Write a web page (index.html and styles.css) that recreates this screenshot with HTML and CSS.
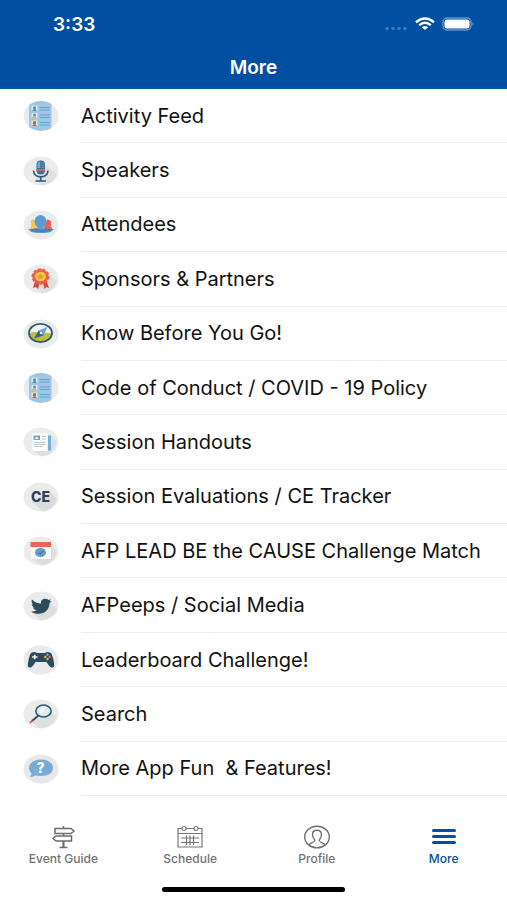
FILE: index.html
```html
<!DOCTYPE html>
<html lang="en">
<head>
    <meta charset="UTF-8">
    <meta name="viewport" content="width=device-width, initial-scale=1.0">
    <title>More</title>
    <link rel="stylesheet" href="styles.css">
</head>
<body>
    <header class="header">
        <div class="status-bar">
            <span class="time">3:33</span>
            <div class="status-icons">
                <svg width="24" height="16" viewBox="0 0 24 16" fill="#3f78bb" aria-hidden="true">
                    <circle cx="3" cy="12.5" r="1.8"/><circle cx="9" cy="12.5" r="1.8"/><circle cx="15" cy="12.5" r="1.8"/><circle cx="21" cy="12.5" r="1.8"/>
                </svg>
                <svg width="20" height="16" viewBox="0 0 20 16" fill="none" stroke="#fff" stroke-width="2.4" aria-hidden="true">
                    <path d="M1 6.2Q10-1.2 19 6.2"/>
                    <path d="M4.2 9.2Q10 4.4 15.8 9.2"/>
                    <path d="M6.8 11.2Q10 8.8 13.2 11.2L10 14Z" fill="#fff" stroke="none"/>
                </svg>
                <svg width="33" height="16" viewBox="0 0 33 16" aria-hidden="true">
                    <rect x="1" y="2" width="28" height="12" rx="4" fill="none" stroke="#5f92cb" stroke-width="1.4"/>
                    <rect x="2.5" y="3.5" width="25" height="9" rx="2.5" fill="#fff"/>
                    <path d="M30.5 6Q33 8 30.5 10Z" fill="#5f92cb"/>
                </svg>
            </div>
        </div>
        <h1>More</h1>
    </header>

    <main>
        <ul class="menu">
            <li>
                <a href="#">
                    <svg class="icon" viewBox="0 0 36 30" aria-hidden="true">
                        <defs>
                            <clipPath id="disc"><ellipse cx="18" cy="15" rx="17.5" ry="15"/></clipPath>
                            <g id="feed">
                                <ellipse cx="18" cy="15" rx="17.5" ry="14.5" fill="#e9eaea"/>
                                <path clip-path="url(#disc)" fill="#9dc7e5" d="M6 0H28.5V30H6Z"/>
                                <path fill="#d8eaf5" d="M8.5 4.5h6V10h-6zM8.5 12h6v5.5h-6zM8.5 19.5h6V25h-6z"/>
                                <path fill="#4a88bf" d="M9 10Q11.5 6 14 10Z"/>
                                <circle cx="11.5" cy="6.8" r="1.5" fill="#4a88bf"/>
                                <path fill="#c9b44c" d="M8.5 17.5Q11 13.5 14.5 17.5Z"/>
                                <circle cx="11.5" cy="14" r="1.5" fill="#6d8f9f"/>
                                <path fill="#d9534f" d="M9 25Q11.5 21 14 25Z"/>
                                <circle cx="11.5" cy="21.8" r="1.7" fill="#d9534f"/>
                                <path stroke="#6a9fc8" stroke-width="1.2" d="M16.5 6.5H26.5M16.5 9H26.5M16.5 14H26.5M16.5 16.500H26.5M16.5 21.5H26.5M16.5 24H26.5"/>
                            </g>
                        </defs>
                        <use href="#feed"/>
                    </svg>
                    <span>Activity Feed</span>
                </a>
            </li>
            <li>
                <a href="#">
                    <svg class="icon" viewBox="0 0 36 30" aria-hidden="true">
                        <ellipse cx="18" cy="15" rx="17.5" ry="14.5" fill="#ececec"/>
                        <path fill="#dfe1e1" d="M22 9L34 18Q30 28 19 29.5L12 24Z"/>
                        <path fill="none" stroke="#2d5872" stroke-width="1.6" d="M10.5 14.5C10.500 23 25 23 25 14.5M17.700 21V25M12.500 25H23"/>
                        <rect x="13.5" y="4.5" width="8.500" height="14" rx="4" fill="#3f7195"/>
                        <path fill="#72a9ce" d="M14.5 8.5Q14.5 5.5 17 5.5V12H14.5Z"/>
                        <path fill="#d9604f" d="M13.5 13H22V15H13.5Z"/>
                        <path stroke="#7fadcb" stroke-width=".6" d="M17.5 7H21M17.5 9.3H21.3M17.5 11.5H21.3"/>
                    </svg>
                    <span>Speakers</span>
                </a>
            </li>
            <li>
                <a href="#">
                    <svg class="icon" viewBox="0 0 36 30" aria-hidden="true">
                        <ellipse cx="18" cy="15" rx="17.5" ry="14.5" fill="#eaebeb"/>
                        <path fill="#f2c94f" d="M5 20Q9 18 8 14Q6.5 9.5 11 9.5L15 20Z"/>
                        <path fill="#ec6150" d="M31 20Q27 18 28 14Q29 9.5 24 9.5L20 20Z"/>
                        <ellipse cx="17.5" cy="11.5" rx="6" ry="6.5" fill="#5b9bd0"/>
                        <path fill="#5b9bd0" d="M14.5 15H20.500V18Q27 19 29 21Q27 23 18 23Q9 23 7 21Q9 19 14.5 18Z"/>
                        <path fill="#4681b1" d="M5 19.5L13 18.500Q18 21 23 18.5L31 19.5Q28 22 18 22Q8 22 5 19.5Z"/>
                    </svg>
                    <span>Attendees</span>
                </a>
            </li>
            <li>
                <a href="#">
                    <svg class="icon" viewBox="0 0 36 30" aria-hidden="true">
                        <ellipse cx="18" cy="15" rx="17.5" ry="14.5" fill="#ececec"/>
                        <path fill="#dfe1e1" d="M25 9L34 18Q30 28 19 29.5L12 23Z"/>
                        <path fill="#d14b3b" d="M12 17L10 24L13 23L15 25L17 18L20 18L21.5 25L23.5 23L26 24L23.5 17Z"/>
                        <ellipse cx="17.5" cy="12.5" rx="8" ry="7.2" fill="#ee5d45" stroke="#ee5d45" stroke-width="2" stroke-dasharray="3 1.7"/>
                        <ellipse cx="17.5" cy="12.5" rx="5.5" ry="4.8" fill="#f7c548"/>
                        <path fill="#e79a32" d="M17.5 9L18.6 11.4L21.2 11.6L19.2 13.3L19.9 15.8L17.5 14.4L15.1 15.8L15.8 13.3L13.8 11.6L16.4 11.4Z"/>
                    </svg>
                    <span>Sponsors &amp; Partners</span>
                </a>
            </li>
            <li>
                <a href="#">
                    <svg class="icon" viewBox="0 0 36 30" aria-hidden="true">
                        <ellipse cx="18" cy="15" rx="17.5" ry="14.5" fill="#eaebeb"/>
                        <ellipse cx="17.5" cy="14" rx="11.3" ry="9.2" fill="#f1f5f6"/>
                        <path fill="#c0bd43" d="M6.5 14.5Q12 11.5 17 15Q22 13 28.5 14.5Q27 22.5 17.5 23Q8 22.5 6.5 14.5Z"/>
                        <ellipse cx="17.5" cy="14" rx="11.5" ry="9.2" fill="none" stroke="#315c77" stroke-width="1.8"/>
                        <path fill="#6ca3d0" d="M24.5 8L20.5 16.5L15.5 11.5Z"/>
                        <path fill="#356389" d="M11 19.5L15.5 11.5L20.5 16.5Z"/>
                        <circle cx="18" cy="14" r="1.3" fill="#e6edf0"/>
                    </svg>
                    <span>Know Before You Go!</span>
                </a>
            </li>
            <li>
                <a href="#">
                    <svg class="icon" viewBox="0 0 36 30" aria-hidden="true"><use href="#feed"/></svg>
                    <span>Code of Conduct / COVID - 19 Policy</span>
                </a>
            </li>
            <li>
                <a href="#">
                    <svg class="icon" viewBox="0 0 36 30" aria-hidden="true">
                        <ellipse cx="18" cy="15" rx="17.5" ry="14.5" fill="#ebecec"/>
                        <path fill="#dddfe0" d="M28 8L34 15Q32 26 19 29.5L10 24Z"/>
                        <path fill="#fff" d="M9.5 6.5H24.5V24H11Q9.5 24 9.5 22Z"/>
                        <path fill="#77aed8" d="M25 8.5H28V22Q28 24 26.5 24Q25 24 25 22Z"/>
                        <path fill="#6f9fca" d="M10.5 8.5H17V13H10.5Z"/>
                        <path fill="#f4f8fa" d="M11.5 12L13.5 9.5L16 12Z"/>
                        <path stroke="#bdc7cf" stroke-width="1.2" d="M18.5 9.5H23M18.5 12H23M11 15.5H23M11 17.5H23M11 19.5H20"/>
                    </svg>
                    <span>Session Handouts</span>
                </a>
            </li>
            <li>
                <a href="#">
                    <svg class="icon" viewBox="0 0 36 30" aria-hidden="true">
                        <ellipse cx="18" cy="15" rx="17.5" ry="14.5" fill="#eaebeb"/>
                        <path fill="#dadcdc" d="M27 10L34 17Q31 27 20 29.5L8 19Z"/>
                        <text class="icon-text" x="17.5" y="19.5" fill="#2c4355">CE</text>
                    </svg>
                    <span>Session Evaluations / CE Tracker</span>
                </a>
            </li>
            <li>
                <a href="#">
                    <svg class="icon" viewBox="0 0 36 30" aria-hidden="true">
                        <ellipse cx="18" cy="15" rx="17.5" ry="14.5" fill="#ebecec"/>
                        <path fill="#dddede" d="M28 9L34 16Q31 28 19 29.5L9 23Z"/>
                        <path fill="#fafafa" d="M8 9H28V23H10Q8 23 8 21Z"/>
                        <path fill="#ec6550" d="M7.5 6H28V11H7.5Z"/>
                        <ellipse cx="17.5" cy="16.5" rx="5.5" ry="4.5" fill="#639ccd"/>
                        <path fill="none" stroke="#4379a5" stroke-width="1.1" d="M14.5 17.5L17 18L20.500 15"/>
                    </svg>
                    <span>AFP LEAD BE the CAUSE Challenge Match</span>
                </a>
            </li>
            <li>
                <a href="#">
                    <svg class="icon" viewBox="0 0 36 30" aria-hidden="true">
                        <ellipse cx="18" cy="15" rx="17.5" ry="14.5" fill="#eaebeb"/>
                        <path fill="#dddede" d="M26 10L34 18Q30 28 18 29.5L9 21Z"/>
                        <path fill="#2e4b5b" d="M9 8.5C11.5 11 14.5 12.5 18 12.5C17.5 9 20 7.5 22.5 7.7C24 7.8 25 8.3 25.5 9L28 8.3L26.5 10.2L28.5 10L26.5 12.3C26.2 19 21.5 23 15.5 22.8C12.5 22.7 10 22 8 20.7C10.5 20.7 12.2 20.2 13.7 19C11.7 18.8 10.5 18 10 16.5H11.5C9.7 15.8 8.8 14.6 8.7 13L10.2 13.4C8.6 12 8.2 10.2 9 8.5Z"/>
                    </svg>
                    <span>AFPeeps / Social Media</span>
                </a>
            </li>
            <li>
                <a href="#">
                    <svg class="icon" viewBox="0 0 36 30" aria-hidden="true">
                        <ellipse cx="18" cy="15" rx="17.5" ry="14.5" fill="#e9eaea"/>
                        <path fill="#2e4b5e" d="M9 7.5Q12 6.5 14 8H22Q24 6.5 27 7.5Q29.5 8 31 18Q32 23 28.5 22.5Q26.5 22 23.5 17H12.5Q9.5 22 7.5 22.5Q4 23 5 18Q6.5 8 9 7.5Z"/>
                        <path stroke="#e8edef" stroke-width="1.7" d="M9 12H14.5M11.75 9.7V14.3"/>
                        <circle cx="24.5" cy="9.8" r="1.2" fill="#6fb3dc"/><circle cx="22.3" cy="11.9" r="1.2" fill="#e9bf4b"/><circle cx="26.7" cy="11.9" r="1.2" fill="#e56a53"/><circle cx="24.5" cy="14" r="1.2" fill="#b9c452"/>
                    </svg>
                    <span>Leaderboard Challenge!</span>
                </a>
            </li>
            <li>
                <a href="#">
                    <svg class="icon" viewBox="0 0 36 30" aria-hidden="true">
                        <ellipse cx="18" cy="15" rx="17.5" ry="14.5" fill="#eaebeb"/>
                        <path fill="#dedfdf" d="M27 14L34 17Q30 28 17 29.5L9 23Z"/>
                        <path stroke="#2e5068" stroke-width="2" d="M15.5 16.500L9 22"/>
                        <path stroke="#dc5c4d" stroke-width="2" d="M9.5 21.6L7 23.7"/>
                        <ellipse cx="20.5" cy="12" rx="7.7" ry="6" fill="#e3ebf0" stroke="#315872" stroke-width="1.6"/>
                        <path fill="#f5f8f9" d="M16 12Q17 7.500 23 8.5L18 15Z"/>
                    </svg>
                    <span>Search</span>
                </a>
            </li>
            <li>
                <a href="#">
                    <svg class="icon" viewBox="0 0 36 30" aria-hidden="true">
                        <ellipse cx="18" cy="15" rx="17.5" ry="14.5" fill="#e6e8e9"/>
                        <path fill="#78abd8" d="M18 5.5C25 5.5 30 9 30 14C30 19 25 22 18 22C16 22 14 21.8 12.5 21.2C11 22.5 9 23 6.5 22.5C8 21.5 8.5 20.5 8.5 19C7 17.8 6 16 6 14C6 9 11 5.5 18 5.5Z"/>
                        <text class="icon-text" x="17.5" y="18.5" fill="#fff">?</text>
                    </svg>
                    <span class="wide-space">More App Fun  &amp; Features!</span>
                </a>
            </li>
        </ul>
    </main>

    <footer class="footer">
        <nav class="tabs">
            <a href="#">
                <svg width="26" height="24" viewBox="0 0 26 24" fill="none" stroke="#6c6c6c" stroke-width="1.5" aria-hidden="true">
                    <path d="M5 3.5H21L24 6L21 8.5H5ZM21.5 11H6L3 13.500L6 16H21.5ZM13.5 1V3.5M13.5 8.5V11"/>
                    <path stroke-width="2.2" d="M13.5 16V22"/>
                    <path d="M9.500 22.5H17.5"/>
                </svg>
                <span>Event Guide</span>
            </a>
            <a href="#">
                <svg width="26" height="24" viewBox="0 0 26 24" fill="none" stroke="#777" stroke-width="1.2" aria-hidden="true">
                    <path d="M5 3.5H1V22H25V3.5H21M9 3.5H17M1 8.5H25"/>
                    <circle cx="7" cy="3.5" r="2"/><circle cx="19" cy="3.5" r="2"/>
                    <path d="M4 13H22M4 17.5H22M9.500 10.5V20M13 10.5V20M16.500 10.5V20"/>
                </svg>
                <span>Schedule</span>
            </a>
            <a href="#">
                <svg width="26" height="24" viewBox="0 0 26 24" fill="none" stroke="#727272" stroke-width="1.4" aria-hidden="true">
                    <ellipse cx="13" cy="12" rx="12.3" ry="10.8"/>
                    <path d="M5 20C6 17.500 10.5 17.5 10.8 15.5C10.9 14.6 8.500 13 8.5 9.5C8.5 3.8 17.5 3.8 17.5 9.5C17.5 13 15.1 14.6 15.2 15.5C15.5 17.5 20 17.5 21 20"/>
                </svg>
                <span>Profile</span>
            </a>
            <a href="#" class="active" aria-current="page">
                <svg width="26" height="24" viewBox="0 0 26 24" fill="none" stroke="#004fa3" stroke-width="3" stroke-linecap="round" aria-hidden="true">
                    <path d="M2.500 5.500H23.500M2.500 11.500H23.500M2.500 17.500H23.500"/>
                </svg>
                <span>More</span>
            </a>
        </nav>
        <div class="home-indicator"></div>
    </footer>
</body>
</html>
```

FILE: styles.css
```css
* {
    box-sizing: border-box;
}
body {
    display: flex;
    flex-direction: column;
    min-height: 100vh;
    margin: 0;
    font-family: Inter, "Liberation Sans", sans-serif;
    background: #fff;
    color: #111;
}
a {
    color: inherit;
    text-decoration: none;
}
.header {
    background: #004fa3;
    color: #fff;
    padding-bottom: 9px;
}
.status-bar {
    display: flex;
    justify-content: space-between;
    align-items: center;
    height: 48px;
    padding: 0 32px 0 53px;
}
.time {
    font-size: 19px;
    font-weight: 600;
}
.status-icons {
    display: flex;
    align-items: center;
    gap: 7px;
}
h1 {
    margin: 0;
    padding-top: 8px;
    font-size: 19px;
    line-height: 24px;
    font-weight: 600;
    text-align: center;
}
main {
    display: flex;
    flex: 1;
}
.menu {
    display: grid;
    grid-auto-rows: 1fr;
    width: 100%;
    margin: 0;
    padding: 0;
    list-style: none;
}
.menu a {
    display: flex;
    align-items: center;
    gap: 22px;
    height: 100%;
    padding-left: 23px;
    font-size: 20px;
    line-height: 24px;
}
.menu span {
    display: flex;
    align-items: center;
    flex: 1;
    align-self: stretch;
    border-bottom: 1px solid #ececec;
}
.menu .wide-space {
    white-space: pre;
}
.icon {
    width: 36px;
    height: 30px;
}
.icon-text {
    font-size: 14px;
    font-weight: 800;
    text-anchor: middle;
}
.footer {
    padding: 29px 0 8px;
}
.tabs {
    display: grid;
    grid-template-columns: repeat(4, 1fr);
}
.tabs a {
    display: flex;
    flex-direction: column;
    align-items: center;
    gap: 3px;
    font-size: 12px;
    line-height: 14px;
    font-weight: 500;
    color: #727272;
}
.tabs .active {
    color: #004fa3;
}
.home-indicator {
    width: 36%;
    height: 5px;
    margin: 21px auto 0;
    border-radius: 3px;
    background: #000;
}
```
